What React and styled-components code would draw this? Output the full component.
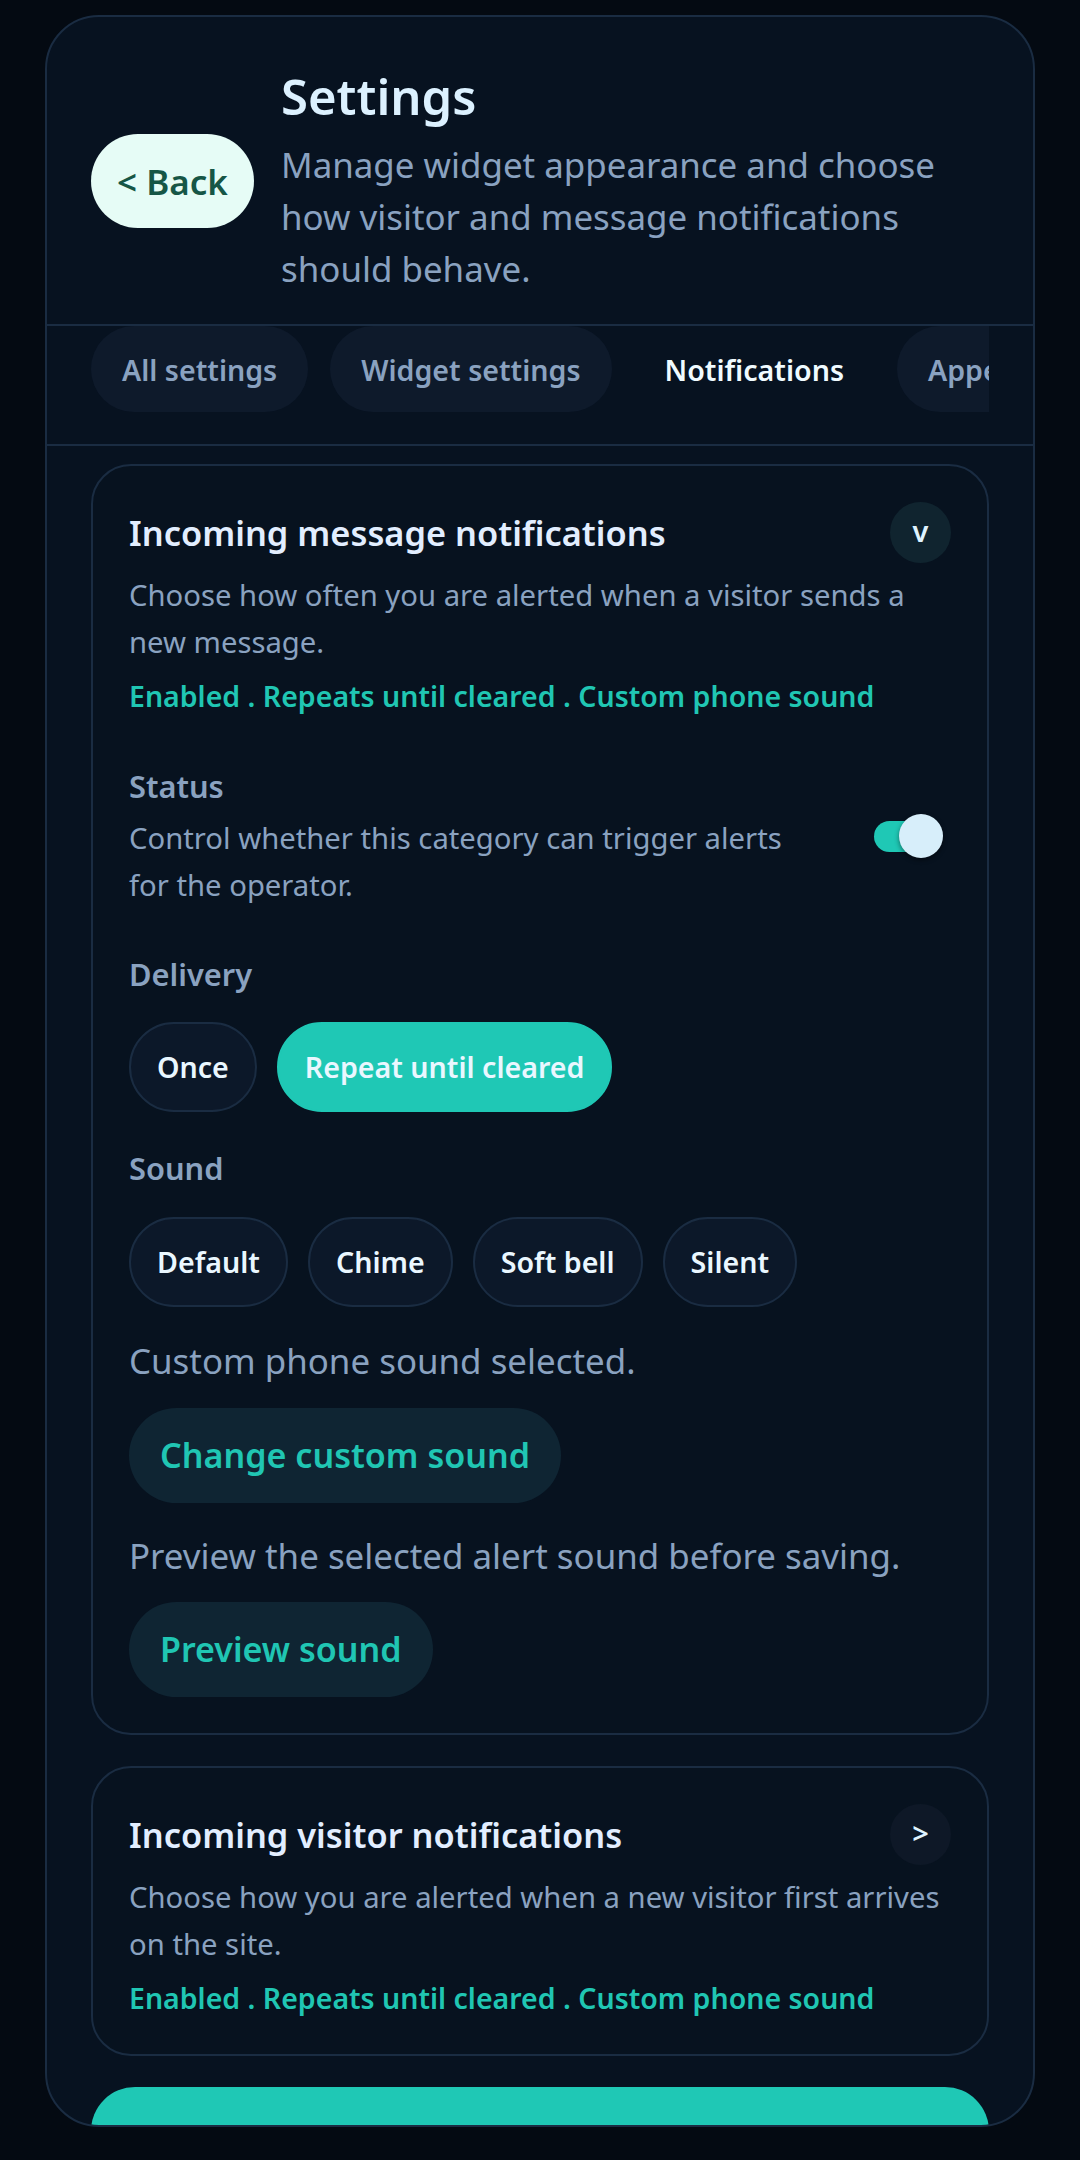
import React, { useState } from "react";
import styled, { createGlobalStyle } from "styled-components";

const GlobalStyle = createGlobalStyle`
  * { box-sizing: border-box; }
  body {
    margin: 0;
    background: #040a12;
    font-family: "Noto Sans", Roboto, "Liberation Sans", Arial, sans-serif;
  }
`;

const Page = styled.div`
  padding: 15px 45px;
`;

const Frame = styled.div`
  height: 2112px;
  border: 2px solid #1a2c42;
  border-radius: 54px;
  background: #071220;
  overflow: hidden;
  display: flex;
  flex-direction: column;
`;

const Header = styled.header`
  display: flex;
  align-items: center;
  gap: 27px;
  padding: 50px 44px 29px;
  border-bottom: 2px solid #1a2c42;
`;

const BackButton = styled.button`
  flex-shrink: 0;
  width: 163px;
  height: 94px;
  border: none;
  border-radius: 47px;
  background: #e6fcf6;
  color: #165646;
  font-family: inherit;
  font-size: 35px;
  font-weight: 600;
  cursor: pointer;
`;

const HeadText = styled.div`
  flex: 1;
`;

const Title = styled.h1`
  margin: 0;
  font-size: 49px;
  line-height: 59px;
  font-weight: 600;
  color: #dcf1ff;
`;

const Subtitle = styled.p`
  margin: 13px 0 0;
  font-size: 34.9px;
  line-height: 52px;
  color: #8aa2c0;
`;

const TabBar = styled.div`
  padding: 0 44px 32px;
  border-bottom: 2px solid #1a2c42;
`;

const TabScroller = styled.div`
  display: flex;
  gap: 22px;
  overflow: hidden;
`;

const Tab = styled.button`
  flex-shrink: 0;
  height: 86px;
  padding: 0 31px;
  border: none;
  border-radius: 43px;
  background: ${(p) => (p.$active ? "transparent" : "#0e1a2b")};
  color: ${(p) => (p.$active ? "#f0fbff" : "#8aa2c0")};
  font-family: inherit;
  font-size: 28.6px;
  font-weight: 600;
  white-space: nowrap;
`;

const Content = styled.div`
  padding: 18px 44px 0;
  display: flex;
  flex-direction: column;
  gap: 31px;
`;

const Card = styled.section`
  border: 2px solid #1a2c42;
  border-radius: 40px;
  padding: 36px;
  background: #07121f;
`;

const CardHead = styled.div`
  display: flex;
  align-items: center;
  justify-content: space-between;
`;

const CardTitle = styled.h2`
  margin: 0;
  font-size: 34.4px;
  line-height: 47px;
  font-weight: 600;
  color: #e2eeff;
`;

const RoundToggle = styled.button`
  width: 61px;
  height: 61px;
  border: none;
  border-radius: 50%;
  background: ${(p) => (p.$open ? "#10242f" : "#0e1827")};
  color: #dff3ff;
  font-family: inherit;
  font-size: 29px;
  font-weight: 600;
  display: flex;
  align-items: center;
  justify-content: center;
  padding: 0 0 4px;
`;

const Desc = styled.p`
  margin: ${(p) => p.$mt || 0}px 0 0;
  font-size: 29.25px;
  line-height: 47px;
  color: #8aa2c0;
`;

const Summary = styled.p`
  margin: 10px 0 0;
  font-size: 28.5px;
  line-height: 40.5px;
  font-weight: 600;
  color: #20c6b3;
`;

const StatusRow = styled.div`
  margin-top: 47px;
  display: flex;
  align-items: center;
  justify-content: space-between;
`;

const StatusText = styled.div`
  max-width: 680px;
`;

const Label = styled.h3`
  margin: ${(p) => p.$mt || 0}px 0 0;
  font-size: 30.8px;
  line-height: 44px;
  font-weight: 600;
  color: #8aa2c0;
`;

const Switch = styled.button`
  position: relative;
  width: 69px;
  height: 44px;
  margin-right: 8px;
  padding: 0;
  border: none;
  background: transparent;
  cursor: pointer;
`;

const Track = styled.span`
  position: absolute;
  left: 0;
  top: 6.5px;
  width: 60px;
  height: 31px;
  border-radius: 16px;
  background: ${(p) => (p.$on ? "#1fc8b5" : "#24364c")};
`;

const Knob = styled.span`
  position: absolute;
  top: 0;
  left: ${(p) => (p.$on ? "25px" : "0")};
  width: 44px;
  height: 44px;
  border-radius: 50%;
  background: #d7eefa;
  box-shadow: 0 2px 5px rgba(0, 0, 0, 0.45);
`;

const Chips = styled.div`
  margin-top: ${(p) => p.$mt}px;
  display: flex;
  flex-wrap: wrap;
  gap: 20px;
`;

const Chip = styled.button`
  height: 90px;
  padding: 0 26px;
  border: 2px solid ${(p) => (p.$active ? "#1fc8b5" : "#1a2c42")};
  border-radius: 45px;
  background: ${(p) => (p.$active ? "#1fc8b5" : "#0c1829")};
  color: #eaf7ff;
  font-family: inherit;
  font-size: 28.6px;
  font-weight: 600;
  cursor: pointer;
`;

const Note = styled.p`
  margin: ${(p) => p.$mt}px 0 0;
  font-size: 34.9px;
  line-height: 54px;
  color: #8aa2c0;
`;

const ActionButton = styled.button`
  display: block;
  margin-top: ${(p) => p.$mt}px;
  height: 95px;
  padding: 0 31px;
  border: none;
  border-radius: 48px;
  background: #0f2533;
  color: #20c6b3;
  font-family: inherit;
  font-size: 34.1px;
  font-weight: 600;
  cursor: pointer;
`;

const SaveButton = styled.button`
  width: 100%;
  padding: 80px 0 30px;
  border: none;
  border-radius: 44px;
  background: #1fc8b5;
  color: #04201c;
  font-family: inherit;
  font-size: 34.1px;
  font-weight: 600;
`;

const tabs = ["All settings", "Widget settings", "Notifications", "Appearance", "Behaviour"];
const deliveries = ["Once", "Repeat until cleared"];
const sounds = ["Default", "Chime", "Soft bell", "Silent"];

const summary = "Enabled . Repeats until cleared . Custom phone sound";

export default function App() {
  const [tab, setTab] = useState("Notifications");
  const [enabled, setEnabled] = useState(true);
  const [delivery, setDelivery] = useState("Repeat until cleared");
  const [sound, setSound] = useState("Custom");

  return (
    <Page>
      <GlobalStyle />
      <Frame>
        <Header>
          <BackButton>&lt; Back</BackButton>
          <HeadText>
            <Title>Settings</Title>
            <Subtitle>
              Manage widget appearance and choose how visitor and message notifications should behave.
            </Subtitle>
          </HeadText>
        </Header>

        <TabBar>
          <TabScroller>
            {tabs.map((t) => (
              <Tab key={t} $active={t === tab} onClick={() => setTab(t)}>
                {t}
              </Tab>
            ))}
          </TabScroller>
        </TabBar>

        <Content>
          <Card>
            <CardHead>
              <CardTitle>Incoming message notifications</CardTitle>
              <RoundToggle $open>v</RoundToggle>
            </CardHead>
            <Desc $mt={9}>Choose how often you are alerted when a visitor sends a new message.</Desc>
            <Summary>{summary}</Summary>

            <StatusRow>
              <StatusText>
                <Label>Status</Label>
                <Desc $mt={7}>Control whether this category can trigger alerts for the operator.</Desc>
              </StatusText>
              <Switch onClick={() => setEnabled(!enabled)}>
                <Track $on={enabled} />
                <Knob $on={enabled} />
              </Switch>
            </StatusRow>

            <Label $mt={43}>Delivery</Label>
            <Chips $mt={26}>
              {deliveries.map((d) => (
                <Chip key={d} $active={d === delivery} onClick={() => setDelivery(d)}>
                  {d}
                </Chip>
              ))}
            </Chips>

            <Label $mt={34}>Sound</Label>
            <Chips $mt={27}>
              {sounds.map((s) => (
                <Chip key={s} $active={s === sound} onClick={() => setSound(s)}>
                  {s}
                </Chip>
              ))}
            </Chips>

            <Note $mt={27}>Custom phone sound selected.</Note>
            <ActionButton $mt={20}>Change custom sound</ActionButton>
            <Note $mt={26}>Preview the selected alert sound before saving.</Note>
            <ActionButton $mt={19}>Preview sound</ActionButton>
          </Card>

          <Card>
            <CardHead>
              <CardTitle>Incoming visitor notifications</CardTitle>
              <RoundToggle>&gt;</RoundToggle>
            </CardHead>
            <Desc $mt={9}>Choose how you are alerted when a new visitor first arrives on the site.</Desc>
            <Summary>{summary}</Summary>
          </Card>

          <SaveButton>Save changes</SaveButton>
        </Content>
      </Frame>
    </Page>
  );
}
